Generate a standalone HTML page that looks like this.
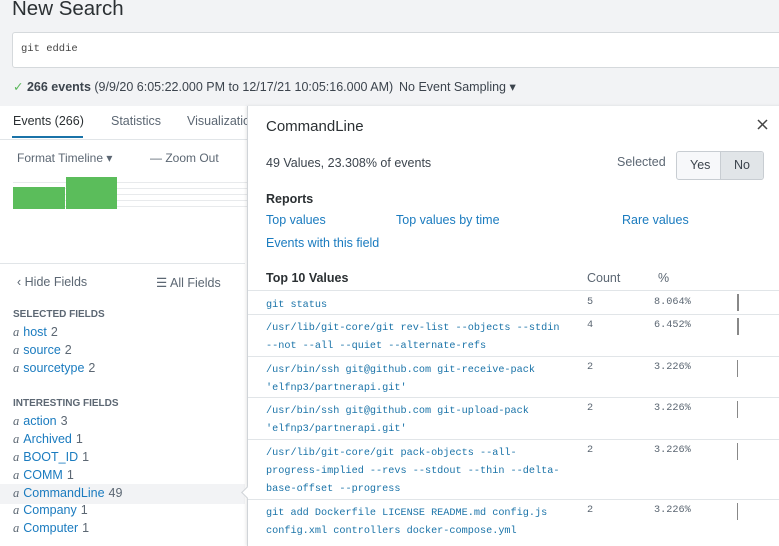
<!DOCTYPE html>
<html><head><style>
body{margin:0;width:779px;height:542px;overflow:hidden;background:#fff;font-family:"Liberation Sans",sans-serif;position:relative;color:#3c444d}
.a{position:absolute;white-space:nowrap}
.mono{font-family:"Liberation Mono",monospace;font-size:10.2px;color:#1a73a8}
.lk{color:#1a7bbf;font-size:12.5px}
.f{font-size:12.5px;color:#1a7bbf}
.f i{font-family:"Liberation Serif",serif;color:#5c6773;margin-right:4px}
.f span{color:#5c6773;margin-left:4px}
.hl{position:absolute;left:248px;width:531px;height:1px;background:#e1e5e8}
.bar{position:absolute;left:737px;width:2px;background:#888}
</style></head><body>
<div class="a" style="left:0;top:0;width:779px;height:106px;background:#f2f3f5"></div>
<div class="a" style="left:12px;top:-3px;font-size:20.5px;color:#2b3033">New Search</div>
<div class="a" style="left:12px;top:32px;width:780px;height:34px;background:#fff;border:1px solid #d5d9dc;border-radius:3px"></div>
<div class="a mono" style="left:21px;top:43px;color:#444;font-size:10.5px">git eddie</div>
<div class="a" style="left:13px;top:79px;font-size:12.5px;color:#3c444d"><span style="color:#5cb85c">✓</span> <b>266 events</b> (9/9/20 6:05:22.000 PM to 12/17/21 10:05:16.000 AM)</div>
<div class="a" style="left:399px;top:79px;font-size:12.5px">No Event Sampling ▾</div>
<div class="a" style="left:13px;top:114px;font-size:12.5px;color:#2b3033">Events (266)</div>
<div class="a" style="left:12px;top:136px;width:71px;height:2px;background:#1a73a8"></div>
<div class="a" style="left:0;top:139px;width:250px;height:1px;background:#e1e5e8"></div>
<div class="a" style="left:111px;top:114px;font-size:12.5px;color:#5c6773">Statistics</div>
<div class="a" style="left:187px;top:114px;font-size:12.5px;color:#5c6773">Visualizatio</div>
<div class="a" style="left:17px;top:151px;font-size:12px;color:#5c6773">Format Timeline ▾</div>
<div class="a" style="left:150px;top:151px;font-size:12px;color:#5c6773">— Zoom Out</div>
<div class="a" style="left:13px;top:177px;width:235px;height:32px;background:repeating-linear-gradient(#fff 0 5px,#e8eaec 5px 6px)"></div>
<div class="a" style="left:13px;top:187px;width:52px;height:22px;background:#5bbd5b"></div>
<div class="a" style="left:66px;top:177px;width:51px;height:32px;background:#5bbd5b"></div>
<div class="a" style="left:0;top:263px;width:245px;height:1px;background:#e1e5e8"></div>
<div class="a" style="left:17px;top:275px;font-size:12.5px;color:#5c6773">‹ Hide Fields</div>
<div class="a" style="left:156px;top:275px;font-size:12.5px;color:#5c6773">☰ All Fields</div>
<div class="a" style="left:13px;top:309px;font-size:10px;font-weight:bold;color:#5c6773">SELECTED FIELDS</div>
<div class="a f" style="left:13px;top:325px"><i>a</i>host<span>2</span></div>
<div class="a f" style="left:13px;top:343px"><i>a</i>source<span>2</span></div>
<div class="a f" style="left:13px;top:361px"><i>a</i>sourcetype<span>2</span></div>
<div class="a" style="left:13px;top:398px;font-size:10px;font-weight:bold;color:#5c6773">INTERESTING FIELDS</div>
<div class="a" style="left:0;top:484px;width:245px;height:20px;background:#f2f3f5"></div>
<div class="a f" style="left:13px;top:414px"><i>a</i>action<span>3</span></div>
<div class="a f" style="left:13px;top:432px"><i>a</i>Archived<span>1</span></div>
<div class="a f" style="left:13px;top:450px"><i>a</i>BOOT_ID<span>1</span></div>
<div class="a f" style="left:13px;top:468px"><i>a</i>COMM<span>1</span></div>
<div class="a f" style="left:13px;top:486px"><i>a</i>CommandLine<span>49</span></div>
<div class="a f" style="left:13px;top:503px"><i>a</i>Company<span>1</span></div>
<div class="a f" style="left:13px;top:521px"><i>a</i>Computer<span>1</span></div>
<div class="a" style="left:247px;top:106px;width:540px;height:440px;background:#fff;border-left:1px solid #d0d4d8;box-shadow:-1px 0 3px rgba(0,0,0,.1)"></div>
<div class="a" style="left:243px;top:488px;width:8px;height:8px;background:#fff;border-left:1px solid #d0d4d8;border-bottom:1px solid #d0d4d8;transform:rotate(45deg)"></div>
<div class="a" style="left:266px;top:118px;font-size:15px;color:#2b3033">CommandLine</div>
<svg class="a" style="left:757px;top:119px" width="11" height="11"><path d="M1 1L10 10M10 1L1 10" stroke="#444" stroke-width="1.5"/></svg>
<div class="a" style="left:266px;top:156px;font-size:12.5px">49 Values, 23.308% of events</div>
<div class="a" style="left:617px;top:155px;font-size:12.5px;color:#5c6773">Selected</div>
<div class="a" style="left:676px;top:151px;width:86px;height:27px;border:1px solid #c8cdd2;border-radius:3px;background:#f7f8fa;overflow:hidden">
<div class="a" style="left:43px;top:0;width:43px;height:27px;background:#e1e5e8;border-left:1px solid #c8cdd2"></div>
<div class="a" style="left:13px;top:6px;font-size:12.5px">Yes</div>
<div class="a" style="left:57px;top:6px;font-size:12.5px">No</div></div>
<div class="a" style="left:266px;top:192px;font-size:12.5px;font-weight:bold;color:#2b3033">Reports</div>
<div class="a lk" style="left:266px;top:213px">Top values</div>
<div class="a lk" style="left:396px;top:213px">Top values by time</div>
<div class="a lk" style="left:622px;top:213px">Rare values</div>
<div class="a lk" style="left:266px;top:236px">Events with this field</div>
<div class="a" style="left:266px;top:271px;font-size:12.5px;font-weight:bold;color:#2b3033">Top 10 Values</div>
<div class="a" style="left:587px;top:271px;font-size:12.5px;color:#5c6773">Count</div>
<div class="a" style="left:658px;top:271px;font-size:12.5px;color:#5c6773">%</div>
<div class="hl" style="top:290px"></div>
<div class="hl" style="top:314px"></div>
<div class="hl" style="top:356px"></div>
<div class="hl" style="top:397px"></div>
<div class="hl" style="top:439px"></div>
<div class="hl" style="top:499px"></div>
<div class="a mono" style="left:266px;top:297px;line-height:18px">git status</div>
<div class="a mono" style="left:266px;top:320px;line-height:18px">/usr/lib/git-core/git rev-list --objects --stdin<br>--not --all --quiet --alternate-refs</div>
<div class="a mono" style="left:266px;top:362px;line-height:18px">/usr/bin/ssh git@github.com git-receive-pack<br>'elfnp3/partnerapi.git'</div>
<div class="a mono" style="left:266px;top:403px;line-height:18px">/usr/bin/ssh git@github.com git-upload-pack<br>'elfnp3/partnerapi.git'</div>
<div class="a mono" style="left:266px;top:445px;line-height:18px">/usr/lib/git-core/git pack-objects --all-<br>progress-implied --revs --stdout --thin --delta-<br>base-offset --progress</div>
<div class="a mono" style="left:266px;top:505px;line-height:18px">git add Dockerfile LICENSE README.md config.js<br>config.xml controllers docker-compose.yml</div>
<div class="a mono" style="left:587px;top:297px;color:#5c6773">5</div><div class="a mono" style="left:654px;top:297px;color:#5c6773">8.064%</div>
<div class="a mono" style="left:587px;top:320px;color:#5c6773">4</div><div class="a mono" style="left:654px;top:320px;color:#5c6773">6.452%</div>
<div class="a mono" style="left:587px;top:362px;color:#5c6773">2</div><div class="a mono" style="left:654px;top:362px;color:#5c6773">3.226%</div>
<div class="a mono" style="left:587px;top:403px;color:#5c6773">2</div><div class="a mono" style="left:654px;top:403px;color:#5c6773">3.226%</div>
<div class="a mono" style="left:587px;top:445px;color:#5c6773">2</div><div class="a mono" style="left:654px;top:445px;color:#5c6773">3.226%</div>
<div class="a mono" style="left:587px;top:505px;color:#5c6773">2</div><div class="a mono" style="left:654px;top:505px;color:#5c6773">3.226%</div>
<div class="bar" style="top:294px;height:17px"></div>
<div class="bar" style="top:318px;height:17px"></div>
<div class="bar" style="top:360px;height:17px;width:1px"></div>
<div class="bar" style="top:401px;height:17px;width:1px"></div>
<div class="bar" style="top:443px;height:17px;width:1px"></div>
<div class="bar" style="top:503px;height:17px;width:1px"></div>
</body></html>
